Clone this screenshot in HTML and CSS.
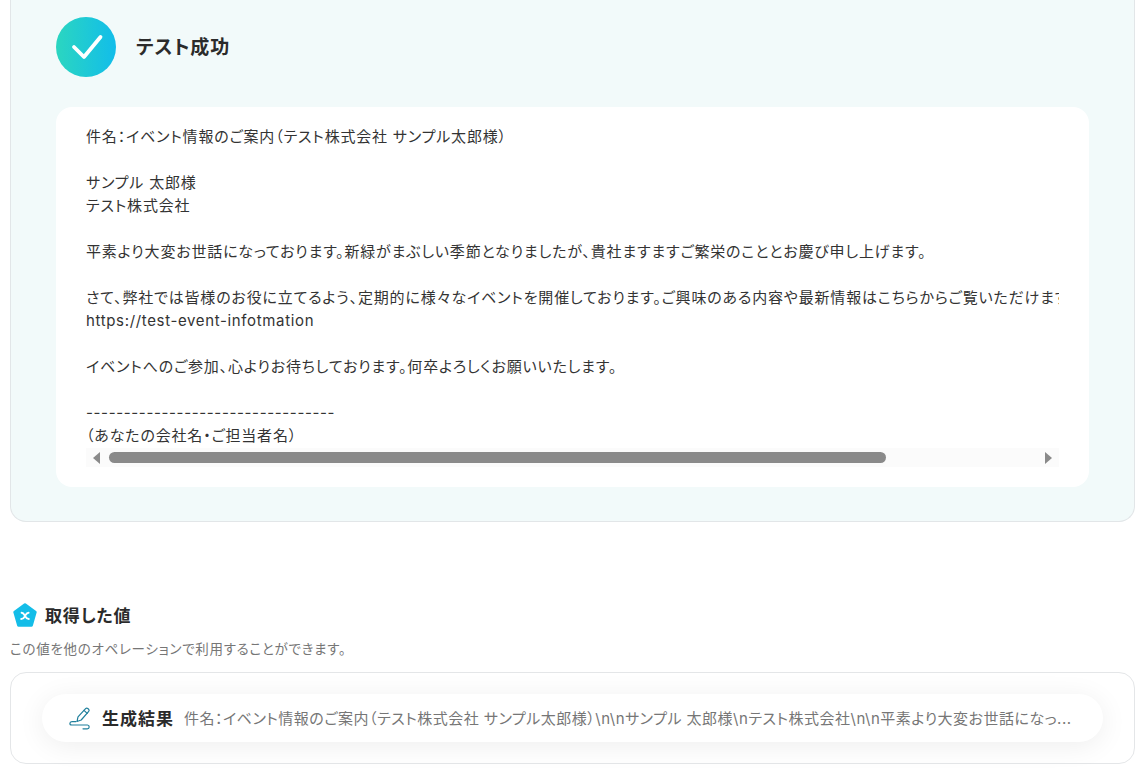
FILE: index.html
```html
<!DOCTYPE html>
<html lang="ja">
<head>
<meta charset="utf-8">
<title>テスト成功</title>
<link rel="stylesheet" href="styles.css">
</head>
<body>
<main class="page">
  <section class="result-panel">
    <header class="result-head">
      <span class="check-badge">
        <svg width="60" height="60" viewBox="0 0 60 60" fill="none"><path d="M18 30 L28 40 L44.5 20" stroke="#fff" stroke-width="3.8" stroke-linecap="round" stroke-linejoin="round"/></svg>
      </span>
      <h1 class="result-title">テスト成功</h1>
    </header>
    <div class="result-card">
      <div class="mail-body">
<pre class="mail-text">件名：イベント情報のご案内（テスト株式会社 サンプル太郎様）

サンプル 太郎様
テスト株式会社

平素より大変お世話になっております。新緑がまぶしい季節となりましたが、貴社ますますご繁栄のこととお慶び申し上げます。

さて、弊社では皆様のお役に立てるよう、定期的に様々なイベントを開催しております。ご興味のある内容や最新情報はこちらからご覧いただけます。
<span class="latin">https://test-event-infotmation</span>

イベントへのご参加、心よりお待ちしております。何卒よろしくお願いいたします。

<span class="latin">---------------------------------</span>
（あなたの会社名・ご担当者名）</pre>
      </div>
      <div class="scrollbar">
        <span class="arrow arrow-left"></span>
        <span class="track"><span class="thumb"></span></span>
        <span class="arrow arrow-right"></span>
      </div>
    </div>
  </section>

  <section class="values">
    <h2 class="values-title">
      <svg class="pentagon" width="24" height="24" viewBox="0 0 24 24"><path d="M12 1.8 L22.2 9.2 L18.4 22.3 H5.6 L1.8 9.2 Z" fill="#14bde8" stroke="#14bde8" stroke-width="3" stroke-linejoin="round"/><path d="M8.6 9.8 C11 9.8 11 11.5 12 13 C13 14.6 13.6 16 15.8 16 M15.6 9.8 C13.4 9.8 13 11.5 12 13 C11 14.6 10.6 16 8.2 16" fill="none" stroke="#fff" stroke-width="1.9" stroke-linecap="round"/></svg>
      <span>取得した値</span>
    </h2>
    <p class="values-note">この値を他のオペレーションで利用することができます。</p>
    <div class="values-box">
      <div class="value-pill">
        <svg class="pen" width="24" height="24" viewBox="0 0 24 24" fill="none" stroke="#1f7f9c" stroke-width="1.2" stroke-linecap="round" stroke-linejoin="round"><path d="M9 15.5 L10 10.8 L17.6 2.6 a1.6 1.6 0 0 1 2.2 -.1 l.8 .7 a1.6 1.6 0 0 1 .1 2.2 L13.2 14 z"/><path d="M16 4.4 l3.2 3"/><path d="M8 15.6 H4 C1.2 15.8 1.2 19 4 19 H19.4 C21.8 19.2 21.8 22.6 19.2 22.8 H15"/></svg>
        <span class="pill-label">生成結果</span>
        <span class="pill-value">件名：イベント情報のご案内（テスト株式会社 サンプル太郎様）\n\nサンプル 太郎様\nテスト株式会社\n\n平素より大変お世話になっ...</span>
      </div>
    </div>
  </section>
</main>
</body>
</html>
```

FILE: styles.css
```css
* { box-sizing: border-box; }

html, body {
  margin: 0;
  padding: 0;
  background: #fff;
  overflow: hidden;
}

body {
  width: 1146px;
  height: 772px;
  font-family: Inter, "Noto Sans CJK JP", sans-serif;
  font-feature-settings: "palt";
  color: #2b2b2b;
}

.page {
  padding: 0 11px 0 10px;
}

.result-panel {
  height: 522px;
  padding: 17px 45px 0;
  background: #f2fafa;
  border: 1px solid #e2e6e8;
  border-top: 0;
  border-radius: 0 0 16px 16px;
}

.result-head {
  display: flex;
  align-items: center;
  gap: 20px;
  height: 60px;
}

.check-badge {
  width: 60px;
  height: 60px;
  flex: none;
  border-radius: 50%;
  background: linear-gradient(90deg, #2bd6c0 0%, #12bdea 100%);
}

.check-badge svg { display: block; }

.result-title {
  margin: 0;
  font-size: 19px;
  font-weight: 700;
  letter-spacing: 1px;
  line-height: 1;
  color: #2b2b2b;
}

.result-card {
  margin-top: 30px;
  width: 1033px;
  height: 380px;
  padding: 18px 30px 20px;
  background: #fff;
  border-radius: 16px;
}

.mail-body {
  height: 323px;
  overflow: hidden;
}

.mail-text {
  margin: 0;
  font: inherit;
  font-size: 15px;
  letter-spacing: 0.82px;
  line-height: 23px;
  white-space: pre;
  color: #333;
}

.latin {
  letter-spacing: 0.65px;
}

.scrollbar {
  display: flex;
  align-items: center;
  width: 973px;
  height: 19px;
  background: #fbfbfb;
}

.track {
  flex: 1;
  display: block;
  padding: 0 9px;
}

.thumb {
  display: block;
  width: 777px;
  height: 11px;
  background: #8a8a8a;
  border-radius: 6px;
}

.arrow {
  width: 0;
  height: 0;
  flex: none;
  border-top: 6px solid transparent;
  border-bottom: 6px solid transparent;
}

.arrow-left {
  margin-left: 7px;
  border-right: 7px solid #8a8a8a;
}

.arrow-right {
  margin-right: 7px;
  border-left: 7px solid #8a8a8a;
}

.values {
  margin-top: 80px;
}

.values-title {
  display: flex;
  align-items: center;
  gap: 8px;
  height: 28px;
  margin: -2px 0 0 3px;
  font-size: 17px;
  font-weight: 700;
  letter-spacing: 0.85px;
  color: #2b2b2b;
}

.pentagon {
  margin-top: 2px;
}

.values-note {
  margin: 11px 0 0;
  font-size: 13.5px;
  letter-spacing: 0.72px;
  line-height: 20px;
  color: #767676;
}

.values-box {
  height: 92px;
  margin-top: 13px;
  padding: 21px 31px 0;
  border: 1px solid #e4e6e8;
  border-radius: 16px;
}

.value-pill {
  display: flex;
  align-items: center;
  height: 48px;
  padding: 0 20px 2px 26px;
  background: #fff;
  border-radius: 24px;
  box-shadow: 0 4px 28px rgba(0, 0, 0, 0.07);
}

.pen {
  flex: none;
  margin-top: 2px;
}

.pill-label {
  flex: none;
  margin-left: 10px;
  font-size: 17px;
  font-weight: 700;
  letter-spacing: 1px;
  color: #2b2b2b;
}

.pill-value {
  flex: 1;
  min-width: 0;
  margin-left: 10px;
  white-space: nowrap;
  font-size: 15px;
  letter-spacing: 0.5px;
  color: #767676;
}
```
